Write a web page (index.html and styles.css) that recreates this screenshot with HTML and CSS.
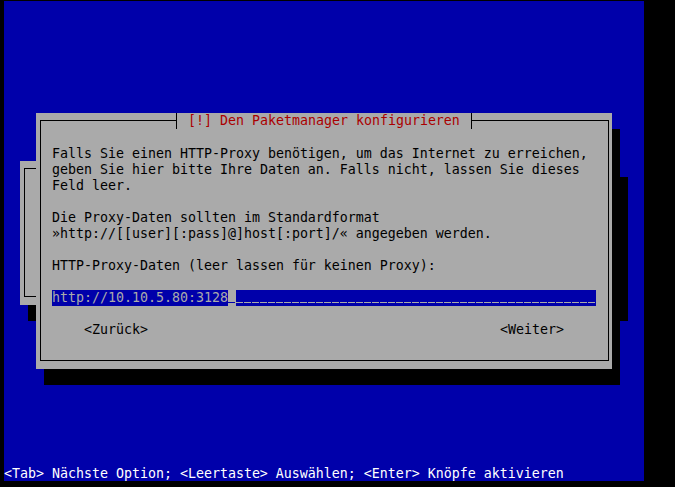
FILE: index.html
```html
<!DOCTYPE html>
<html lang="de">
<head>
    <meta charset="UTF-8">
    <meta name="viewport" content="width=device-width, initial-scale=1.0">
    <title>Den Paketmanager konfigurieren</title>
    <link rel="stylesheet" href="styles.css">
</head>
<body>
    <div class="screen">
        <!-- dialog left over from the previous step -->
        <div class="window backdrop">
            <div class="frame"></div>
        </div>

        <div class="window dialog">
            <div class="frame">
                <div class="title">&nbsp;[!] Den Paketmanager konfigurieren&nbsp;</div>

                <div class="content">
                    <p>Falls Sie einen HTTP-Proxy benötigen, um das Internet zu erreichen,<br>geben Sie hier bitte Ihre Daten an. Falls nicht, lassen Sie dieses<br>Feld leer.</p>
                    <p>Die Proxy-Daten sollten im Standardformat<br>»http://[[user][:pass]@]host[:port]/« angegeben werden.</p>
                    <p>HTTP-Proxy-Daten (leer lassen für keinen Proxy):</p>

                    <div class="field"><span class="value">http://10.10.5.80:3128</span><span class="cursor"></span><span class="fill"></span></div>

                    <div class="buttons">
                        <span class="button">&lt;Zurück&gt;</span>
                        <span class="button">&lt;Weiter&gt;</span>
                    </div>
                </div>
            </div>
        </div>

        <div class="help">&lt;Tab&gt; Nächste Option; &lt;Leertaste&gt; Auswählen; &lt;Enter&gt; Knöpfe aktivieren</div>
    </div>
</body>
</html>
```

FILE: styles.css
```css
:root {
    --blue: #0000aa;
    --gray: #aaaaaa;
    --red: #aa0000;
    --cell-w: 8px;
    --cell-h: 16px;
}

body {
    margin: 0;
    background: #000;
}

.screen {
    position: relative;
    width: 640px;
    height: 480px;
    margin: 1px 0 0 4px;
    background: var(--blue);
    display: flex;
    flex-direction: column;
    justify-content: flex-end;
    font-family: "DejaVu Sans Mono", monospace;
    font-size: 13.29px;
    line-height: var(--cell-h);
    color: #000;
}

/* windows sit on the terminal grid: col * 8px, row * 16px */
.window {
    position: absolute;
    box-sizing: border-box;
    background: var(--gray);
    box-shadow: var(--cell-w) var(--cell-h) 0 #000;
    padding: 7px 3px 8px 4px;
    display: flex;
}

.backdrop {
    left: 16px;
    top: 160px;
    width: 600px;
    height: 144px;
}

.dialog {
    left: 32px;
    top: 112px;
    width: 576px;
    height: 256px;
}

.frame {
    position: relative;
    flex: 1;
    border: 1px solid #000;
}

.title {
    position: absolute;
    top: -8px;
    left: 135px;
    height: 16px;
    padding: 0 3px;
    background: var(--gray);
    border-left: 1px solid #000;
    border-right: 1px solid #000;
    color: var(--red);
    white-space: pre;
}

.content {
    padding: 25px 0 0 11px;
}

.content p {
    margin: 0 0 16px;
    white-space: nowrap;
}

/* input line: text, cursor cell, then underscores to the end */
.field {
    display: flex;
    width: 544px;
    height: 16px;
    margin-top: 16px;
    background: var(--blue);
    color: var(--gray);
    white-space: pre;
}

.field .cursor,
.field .fill {
    background-image: repeating-linear-gradient(to right, var(--gray) 0 7px, transparent 7px 8px);
    background-size: 100% 1px;
    background-position: 0 12px;
    background-repeat: no-repeat;
}

.field .cursor {
    width: 8px;
    background-color: var(--gray);
    background-image: linear-gradient(var(--blue), var(--blue));
    background-size: 7px 1px;
}

.field .fill {
    flex: 1;
}

.buttons {
    width: 544px;
    box-sizing: border-box;
    margin-top: 16px;
    padding: 0 32px;
    display: flex;
    justify-content: space-between;
}

.help {
    height: 16px;
    padding-top: 1px;
    box-sizing: border-box;
    color: #fff;
    white-space: pre;
}
```
